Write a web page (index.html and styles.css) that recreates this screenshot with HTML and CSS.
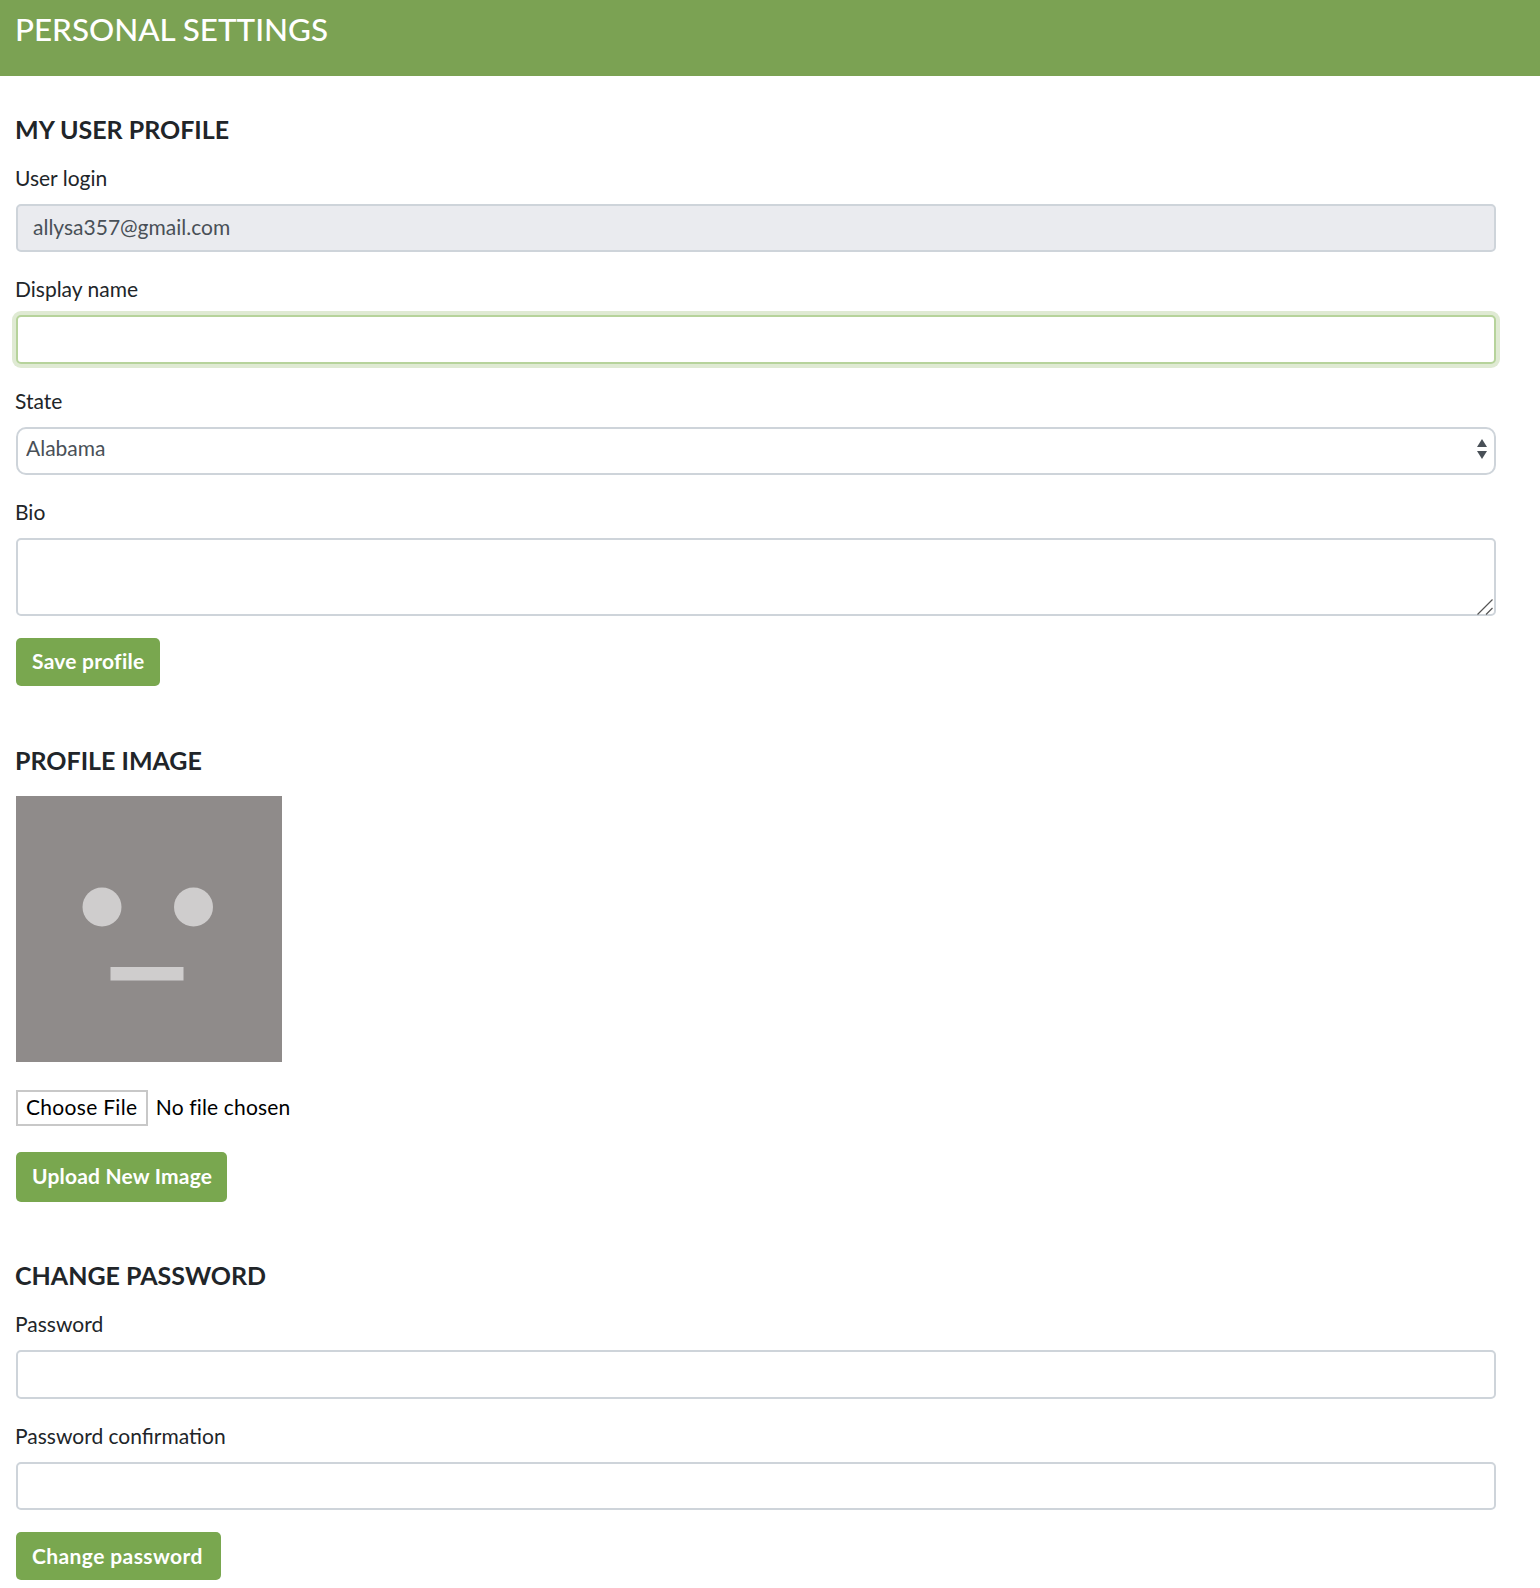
FILE: index.html
```html
<!DOCTYPE html>
<html lang="en">
<head>
<meta charset="utf-8">
<title>Personal Settings</title>
<link rel="stylesheet" href="styles.css">
</head>
<body>
<header class="page-header"><h1 class="page-title">PERSONAL SETTINGS</h1></header>
<main class="content">
  <section class="profile-section">
    <h2 class="section-title">MY USER PROFILE</h2>
    <div class="field">
      <label class="field-label" for="login">User login</label>
      <input class="control" id="login" type="text" value="allysa357@gmail.com" disabled>
    </div>
    <div class="field">
      <label class="field-label" for="display">Display name</label>
      <input class="control control-focus" id="display" type="text">
    </div>
    <div class="field">
      <label class="field-label" for="state">State</label>
      <div class="control-wrap">
        <select class="control control-select" id="state"><option>Alabama</option></select>
        <svg class="select-arrows" width="12" height="21" viewBox="0 0 12 21" aria-hidden="true"><path d="M6 0 11 8H1Z M1 12H11L6 20Z" fill="#495057"/></svg>
      </div>
    </div>
    <div class="field field-last">
      <label class="field-label" for="bio">Bio</label>
      <div class="control-wrap">
        <textarea class="control control-area" id="bio"></textarea>
        <svg class="resize-grip" width="16" height="16" viewBox="0 0 16 16" aria-hidden="true"><path d="M0.500 15.500 15.500 0.500 M9 15.500 15.500 9" fill="none" stroke="#555" stroke-width="1.200"/></svg>
      </div>
    </div>
    <button class="btn" type="button">Save profile</button>
  </section>
  <section class="image-section">
    <h2 class="section-title">PROFILE IMAGE</h2>
    <svg class="avatar" width="266" height="266" viewBox="0 0 266 266" role="img" aria-label="Profile image">
      <rect width="266" height="266" fill="#8f8b8a"/>
      <circle cx="86" cy="111" r="19.5" fill="#cfcdcd"/>
      <circle cx="177.500" cy="111" r="19.500" fill="#cfcdcd"/>
      <rect x="94.500" y="171" width="73" height="13.500" fill="#cfcdcd"/>
    </svg>
    <input class="file-input" type="file">
    <button class="btn btn-upload" type="button">Upload New Image</button>
  </section>
  <section class="password-section">
    <h2 class="section-title">CHANGE PASSWORD</h2>
    <div class="field">
      <label class="field-label" for="pw">Password</label>
      <input class="control" id="pw" type="password">
    </div>
    <div class="field field-last">
      <label class="field-label" for="pwc">Password confirmation</label>
      <input class="control" id="pwc" type="password">
    </div>
    <button class="btn btn-password" type="button">Change password</button>
  </section>
</main>
</body>
</html>
```
FILE: styles.css
```css
* { box-sizing: border-box; }
html, body { margin: 0; background: #fff; }
body {
  font-family: Lato, "Open Sans", sans-serif;
  color: #212529;
  font-size: 21px;
  height: 1588px;
  overflow: hidden;
}
.page-header {
  height: 76px;
  background: #7ba253;
  padding: 10px 15px 0;
}
.page-title {
  margin: 0;
  color: #fff;
  font-size: 31.4px;
  line-height: 38px;
  font-weight: 500;
}
.content { padding: 0 44px 0 16px; }
.section-title {
  margin: 0 0 21px -1px;
  font-size: 25px;
  line-height: 30px;
  font-weight: 700;
  color: #212529;
}
.profile-section { padding-top: 38px; }
.field { margin-bottom: 24px; }
.field-last { margin-bottom: 22px; }
.field-label {
  display: block;
  margin-left: -1px;
  padding-top: 1px;
  font-size: 21px;
  line-height: 24px;
  margin-bottom: 13.83px;
}
.profile-section .section-title { margin-bottom: 21.17px; }
.password-section .section-title { margin-bottom: 21.5px; }
.control {
  display: block;
  width: 100%;
  height: 48.5px;
  padding: 0 15px 3px;
  border: 2px solid #ced4da;
  border-radius: 5px;
  background: #fff;
  color: #495057;
  font: inherit;
  outline: none;
}
.control:disabled { background: #eaebef; color: #495057; opacity: 1; }
.control-focus { border-color: #b6d39b; box-shadow: 0 0 0 4px #dfead3; }
.control-wrap { position: relative; }
.control-select {
  appearance: none;
  padding: 0 8px 6px;
  border-radius: 10px;
}
.select-arrows { position: absolute; right: 8px; top: 12px; }
.control-area { height: 78px; resize: none; }
.resize-grip { position: absolute; right: 3px; bottom: 1px; pointer-events: none; }
.btn {
  display: block;
  height: 48px;
  padding: 0 16px 2px;
  border: 0;
  border-radius: 5px;
  background: #79a74f;
  color: #fff;
  font-family: inherit;
  font-size: 21px;
  font-weight: 700;
  letter-spacing: 0.25px;
}
.btn-password { padding-right: 18px; letter-spacing: 0.4px; }
.image-section { padding-top: 59px; }
.avatar { display: block; margin-bottom: 28px; }
.file-input {
  display: block;
  height: 36px;
  font-family: inherit;
  font-size: 21px;
  letter-spacing: 0.15px;
  line-height: 30px;
  color: #000;
}
.file-input::file-selector-button {
  height: 36px;
  margin: 0 8px 0 0;
  padding: 0 8.5px 3px 8px;
  background: #fff;
  border: 2px solid #c8c8c8;
  font: inherit;
  letter-spacing: 0.3px;
  color: #000;
}
.btn-upload { height: 50px; margin-top: 26px; padding-right: 15px; letter-spacing: 0.2px; }
.password-section { padding-top: 58px; }
```
